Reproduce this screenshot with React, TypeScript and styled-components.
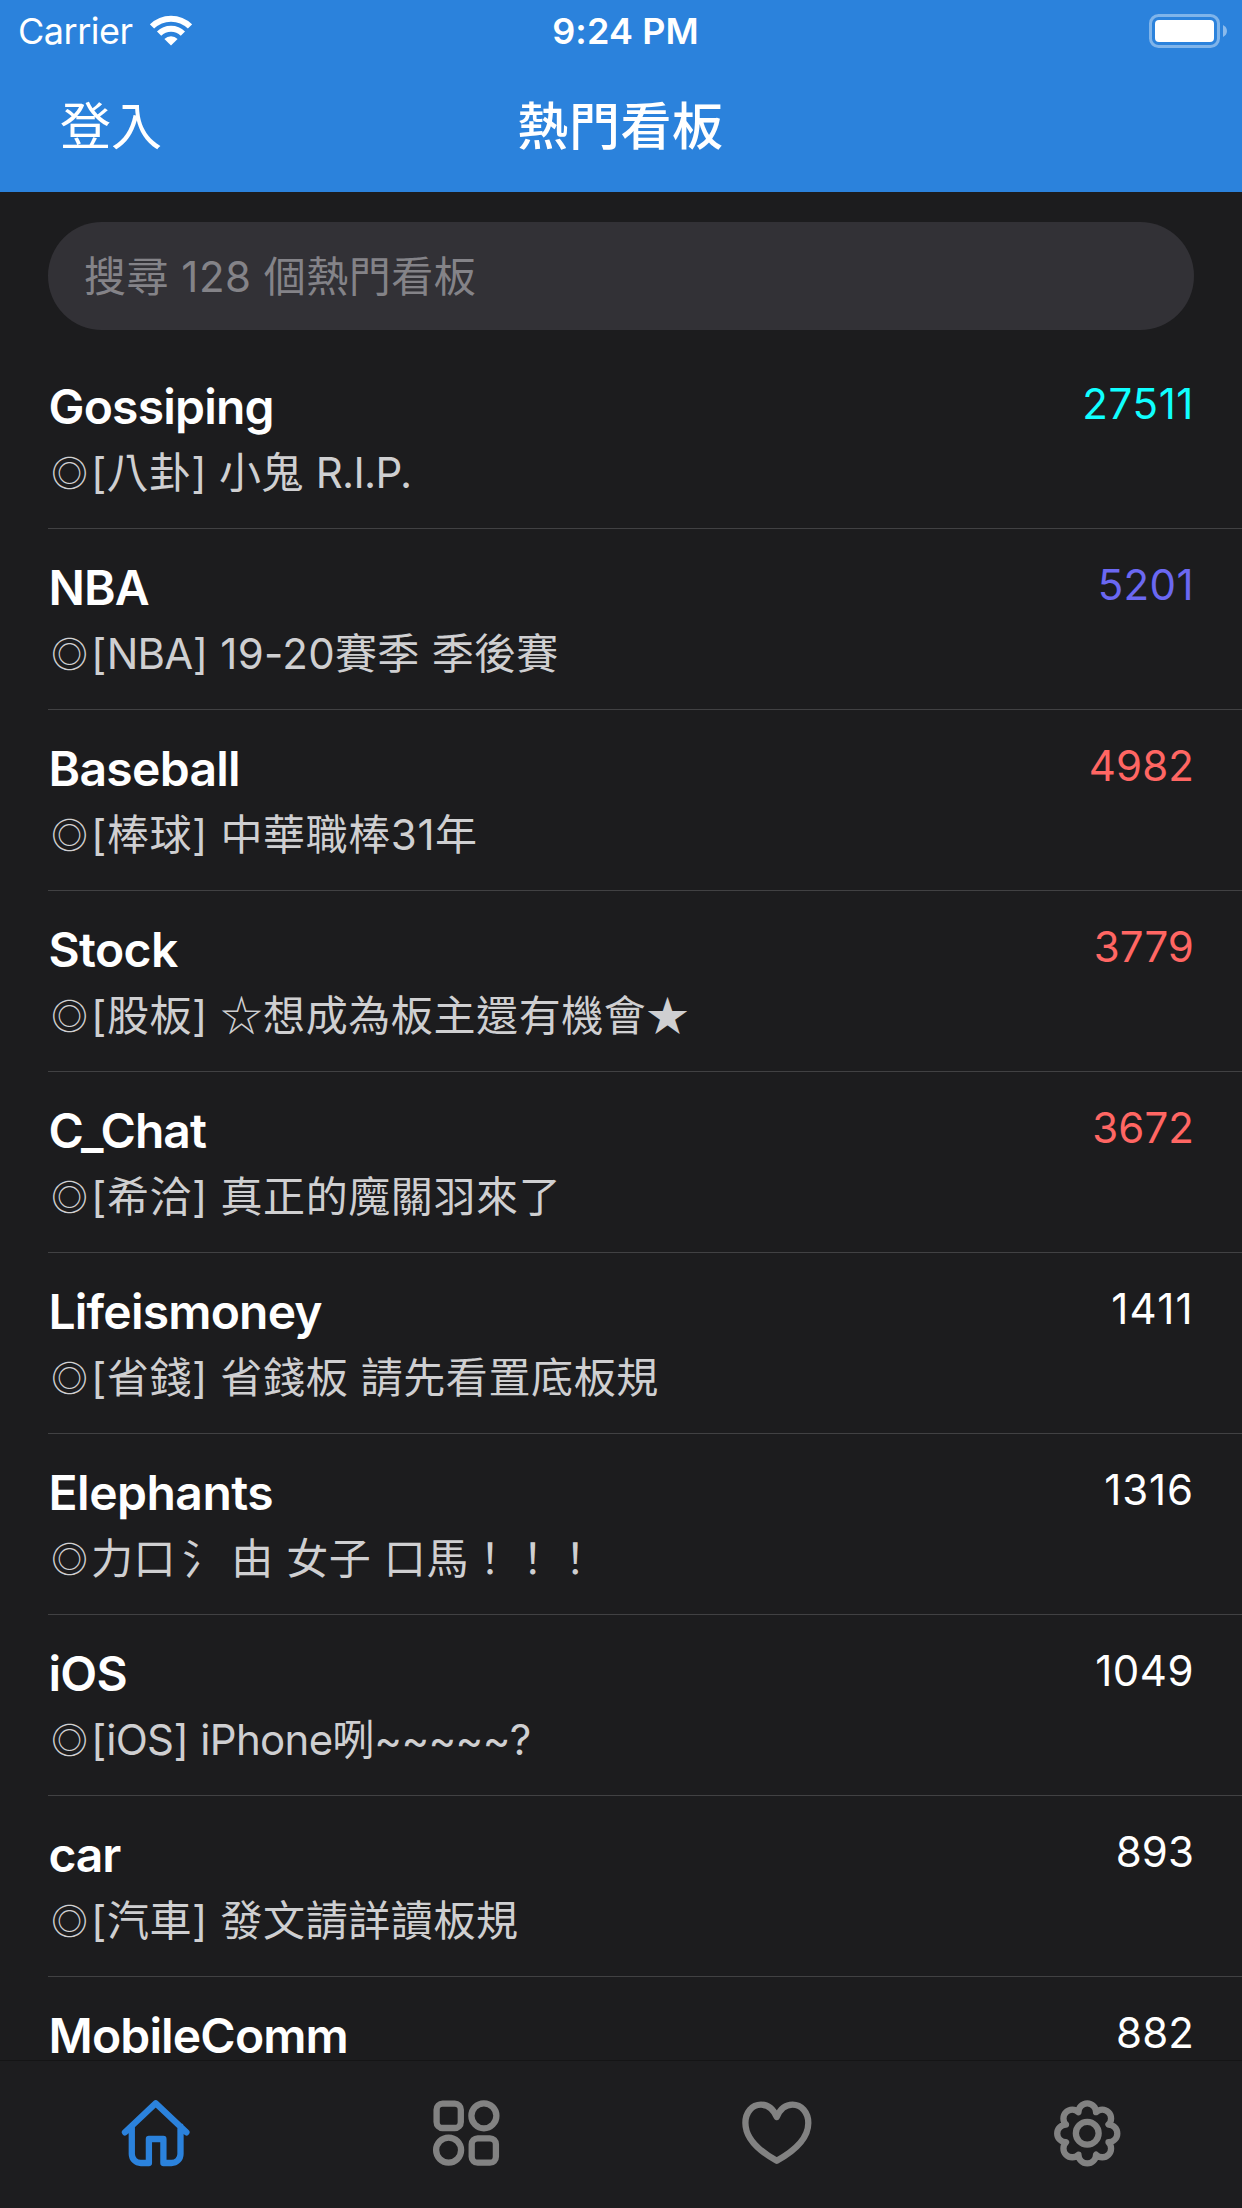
import React from "react";
import styled, { createGlobalStyle } from "styled-components";

const GlobalStyle = createGlobalStyle`
  *, *::before, *::after { box-sizing: border-box; }
  html, body { margin: 0; padding: 0; background: #1c1c1e; }
  body { font-family: Inter, "Noto Sans CJK TC", sans-serif; -webkit-font-smoothing: antialiased; }
`;

const Screen = styled.div`
  display: flex;
  flex-direction: column;
  width: 1242px;
  height: 2208px;
  overflow: hidden;
  background: #1c1c1e;
  color: #fff;
`;

const Header = styled.header`
  flex: none;
  height: 192px;
  background: #2b82dc;
`;

const StatusBar = styled.div`
  display: grid;
  grid-template-columns: 1fr auto 1fr;
  align-items: center;
  height: 60px;
  padding: 0 15px 0 18px;
  font-size: 36px;
  line-height: 60px;
`;

const Carrier = styled.div`
  display: flex;
  align-items: center;
  gap: 17px;
  letter-spacing: -0.5px;

  span { padding-top: 1px; }
`;

const Clock = styled.div`
  padding: 1px 0 0 6px;
  font-weight: 600;
  font-size: 36px;
  letter-spacing: 0.1px;
`;

const Battery = styled.svg`
  justify-self: end;
  display: block;
`;

const NavBar = styled.div`
  display: grid;
  grid-template-columns: 1fr auto 1fr;
  align-items: center;
  height: 132px;
  padding: 2px 60px 0;
  font-size: 51px;
  line-height: 130px;
`;

const NavButton = styled.button`
  justify-self: start;
  padding: 0;
  border: 0;
  background: none;
  color: inherit;
  font: inherit;
  font-weight: 400;
`;

const NavTitle = styled.h1`
  margin: 0;
  padding-right: 1px;
  font-size: 51px;
  font-weight: 500;
  letter-spacing: 0.6px;
`;

const SearchWrap = styled.div`
  flex: none;
  padding: 30px 48px 18px;
`;

const SearchField = styled.input`
  display: block;
  width: 100%;
  height: 108px;
  padding: 0 36px;
  border: 0;
  border-radius: 54px;
  outline: none;
  background: #323136;
  color: #fff;
  font-family: inherit;
  font-size: 42px;
  letter-spacing: 0.5px;
  &::placeholder { color: #848388; opacity: 1; }
`;

const List = styled.ul`
  flex: 1;
  min-height: 0;
  margin: 0;
  padding: 0;
  overflow: hidden;
  list-style: none;
`;

const Row = styled.li`
  display: flex;
  justify-content: space-between;
  height: 181px;
  margin-left: 48px;
  padding: 29px 48px 0 0;
  border-bottom: 1px solid #414143;
`;

const BoardName = styled.div<{ $spacing: number }>`
  padding-left: 0.5px;
  font-size: 48px;
  font-weight: 600;
  line-height: 60px;
  letter-spacing: ${(p) => p.$spacing}px;
`;

const BoardTitle = styled.div<{ $spacing: number }>`
  display: flex;
  margin-top: 7px;
  font-size: 42px;
  line-height: 58px;
  letter-spacing: ${(p) => p.$spacing}px;
  color: #cfcfd1;
  white-space: pre;
`;

const Mark = styled.span`
  width: 43px;
  font-family: "Noto Sans CJK TC", sans-serif;
  font-size: 36.5px;
  line-height: 55px;
  text-align: center;
  letter-spacing: 0;
`;

const Star = styled.span`
  font-family: "Noto Sans CJK TC", sans-serif;
  line-height: 0;
`;

const Latin = styled.span`
  letter-spacing: -0.7px;
`;

const Radical = styled.span`
  margin-left: 6px;
  letter-spacing: -2.4px;
`;

const Count = styled.div<{ $color: string; $spacing: number }>`
  padding-top: 1px;
  font-size: 42px;
  line-height: 51px;
  letter-spacing: ${(p) => p.$spacing}px;
  color: ${(p) => p.$color};
`;

const TabBar = styled.nav`
  flex: none;
  display: grid;
  grid-template-columns: repeat(4, 1fr);
  height: 148px;
  border-top: 1px solid #151516;
  background: #1d1d1f;
`;

const Tab = styled.button<{ $active?: boolean }>`
  display: flex;
  justify-content: center;
  align-items: flex-start;
  padding: 36px 0 0;
  border: 0;
  background: none;
  color: ${(p) => (p.$active ? "#2b82dc" : "#828282")};
`;

const TabIcon = styled.svg.attrs({ viewBox: "0 0 72 72", width: 72, height: 72 })`
  fill: none;
  stroke: currentColor;
  stroke-width: 6.3;
  stroke-linecap: round;
  stroke-linejoin: round;
`;

// Flower-shaped cog outline: eight half circles joined at inner cusps.
const cogPath = (() => {
  const pts = Array.from({ length: 8 }, (_, i) => {
    const a = ((22.5 + 45 * i) * Math.PI) / 180;
    return `${(36.25 + 23 * Math.cos(a)).toFixed(2)} ${(36.4 + 23 * Math.sin(a)).toFixed(2)}`;
  });
  return `M${pts[0]}` + [...pts.slice(1), pts[0]].map((p) => `A8 8 0 0 1 ${p}`).join("") + "Z";
})();

type Board = {
  name: string;
  title: string;
  count: number;
  color: string;
  nameSpacing: number;
  titleSpacing?: number;
  countSpacing?: number;
};

const boards: Board[] = [
  { name: "Gossiping", title: "[八卦] 小鬼 R.I.P.", count: 27511, color: "#10ffff", nameSpacing: -0.8, titleSpacing: 0.3, countSpacing: 0.6 },
  { name: "NBA", title: "[NBA] 19-20賽季 季後賽", count: 5201, color: "#6b68f2", nameSpacing: -0.9, titleSpacing: 0.3, countSpacing: 0.4 },
  { name: "Baseball", title: "[棒球] 中華職棒31年", count: 4982, color: "#ff6663", nameSpacing: -0.7 },
  { name: "Stock", title: "[股板] ☆想成為板主還有機會★", count: 3779, color: "#ff6663", nameSpacing: -0.6 },
  { name: "C_Chat", title: "[希洽] 真正的魔關羽來了", count: 3672, color: "#ff6663", nameSpacing: -1 },
  { name: "Lifeismoney", title: "[省錢] 省錢板 請先看置底板規", count: 1411, color: "#fff", nameSpacing: -0.8, countSpacing: 1.3 },
  { name: "Elephants", title: "力口氵 由 女子 口馬！！！", count: 1316, color: "#fff", nameSpacing: -0.5, countSpacing: 0.9 },
  { name: "iOS", title: "[iOS] iPhone咧~~~~~?", count: 1049, color: "#fff", nameSpacing: -0.7, titleSpacing: -0.1, countSpacing: 0.5 },
  { name: "car", title: "[汽車] 發文請詳讀板規", count: 893, color: "#fff", nameSpacing: -1.1 },
  { name: "MobileComm", title: "", count: 882, color: "#fff", nameSpacing: -0.85 },
];

function Title({ text, spacing = 0.6 }: { text: string; spacing?: number }) {
  return (
    <BoardTitle $spacing={spacing}>
      <Mark>◎</Mark>
      <span>
        {text.split(/([☆★]|氵 |[A-Za-z.~?]+)/).map((part, i) => {
          if (part === "☆" || part === "★") return <Star key={i}>{part}</Star>;
          if (part === "氵 ") return <Radical key={i}>{part}</Radical>;
          return i % 2 ? <Latin key={i}>{part}</Latin> : part;
        })}
      </span>
    </BoardTitle>
  );
}

export default function App() {
  return (
    <>
      <GlobalStyle />
      <Screen>
        <Header>
          <StatusBar>
            <Carrier>
              <span>Carrier</span>
              <svg width="42" height="31" viewBox="0 0 42 31" fill="none" stroke="#fff">
                <path d="M2 11.5a26.9 26.9 0 0 1 38 0" strokeWidth="6" />
                <path d="M9.1 18.6a16.8 16.8 0 0 1 23.8 0" strokeWidth="6" />
                <path d="M21 30.6l-6.6-6.6a9.3 9.3 0 0 1 13.2 0z" fill="#fff" stroke="none" />
              </svg>
            </Carrier>
            <Clock>9:24 PM</Clock>
            <Battery width="78" height="34" viewBox="0 0 78 34">
              <rect x="1.5" y="1.5" width="68" height="31" rx="8" fill="none" stroke="#fff" strokeOpacity=".4" strokeWidth="3" />
              <rect x="6" y="6" width="59" height="22" rx="4" fill="#fff" />
              <path d="M74 11c5.3 2.5 5.3 9.5 0 12z" fill="#fff" fillOpacity=".45" />
            </Battery>
          </StatusBar>
          <NavBar>
            <NavButton>登入</NavButton>
            <NavTitle>熱門看板</NavTitle>
          </NavBar>
        </Header>
        <SearchWrap>
          <SearchField placeholder="搜尋 128 個熱門看板" />
        </SearchWrap>
        <List>
          {boards.map((b) => (
            <Row key={b.name}>
              <div>
                <BoardName $spacing={b.nameSpacing}>{b.name}</BoardName>
                {b.title && <Title text={b.title} spacing={b.titleSpacing} />}
              </div>
              <Count $color={b.color} $spacing={b.countSpacing ?? 0.1}>{b.count}</Count>
            </Row>
          ))}
        </List>
        <TabBar>
          <Tab $active>
            <TabIcon>
              <path d="M6 35.3L36.7 6.2 67.4 35.3M12.8 29.5V57a9 9 0 0 0 9 9H29.9V42H44.4V66H52.5a9 9 0 0 0 9-9V29.5" />
            </TabIcon>
          </Tab>
          <Tab>
            <TabIcon>
              <rect x="6.6" y="6.7" width="24.2" height="24.3" rx="6" />
              <circle cx="53.9" cy="18.8" r="12.5" />
              <circle cx="18.6" cy="53.1" r="12.5" />
              <rect x="41.7" y="41.3" width="24.2" height="24.4" rx="6" />
            </TabIcon>
          </Tab>
          <Tab>
            <TabIcon>
              <path d="M36.75 20C33.5 12.5 28.5 7.7 21 7.7 12 7.7 5.4 15.5 5.4 26 5.4 42 20 54.5 36.75 63.7 53.5 54.5 68.3 42 68.3 26 68.3 15.5 61.5 7.7 52.5 7.7 45 7.7 40 12.5 36.75 20Z" />
            </TabIcon>
          </Tab>
          <Tab>
            <TabIcon>
              <path d={cogPath} />
              <circle cx="36.25" cy="36.3" r="11.4" />
            </TabIcon>
          </Tab>
        </TabBar>
      </Screen>
    </>
  );
}
